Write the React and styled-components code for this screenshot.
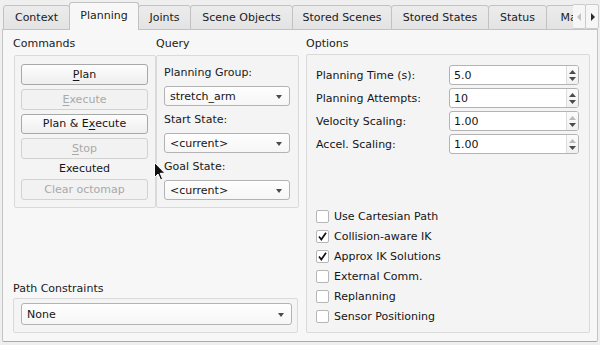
import React from 'react'
import styled, { createGlobalStyle } from 'styled-components'

const GlobalStyle = createGlobalStyle`
  html, body {
    margin: 0;
    padding: 0;
    background: #efefef;
  }
  body {
    font-family: "DejaVu Sans", "Liberation Sans", sans-serif;
    font-size: 11px;
    color: #202020;
  }
`

const tabs = [
  { label: 'Context', w: 67 },
  { label: 'Planning', w: 70, active: true },
  { label: 'Joints', w: 53 },
  { label: 'Scene Objects', w: 103 },
  { label: 'Stored Scenes', w: 100 },
  { label: 'Stored States', w: 98 },
  { label: 'Status', w: 59 },
  { label: 'Manipulation', w: 100 },
]

const spins = [
  { label: 'Planning Time (s):', value: '5.0' },
  { label: 'Planning Attempts:', value: '10' },
  { label: 'Velocity Scaling:', value: '1.00', atMax: true },
  { label: 'Accel. Scaling:', value: '1.00', atMax: true },
]

const checks = [
  { label: 'Use Cartesian Path' },
  { label: 'Collision-aware IK', checked: true },
  { label: 'Approx IK Solutions', checked: true },
  { label: 'External Comm.' },
  { label: 'Replanning' },
  { label: 'Sensor Positioning' },
]

function App() {
  return (
    <Window>
      <GlobalStyle />
      <TabBar>
        <TabStrip>
          {tabs.map((t) => (
            <Tab key={t.label} w={t.w} active={t.active}>
              {t.label}
            </Tab>
          ))}
        </TabStrip>
        <ScrollButton>
          <Arrow viewBox="0 0 5 8" disabled>
            <path d="M4 0 L0 4 L4 8 Z" />
          </Arrow>
        </ScrollButton>
        <ScrollButton>
          <Arrow viewBox="0 0 5 8">
            <path d="M1 0 L5 4 L1 8 Z" />
          </Arrow>
        </ScrollButton>
      </TabBar>

      <Pane>
        <LeftColumn>
          <TopRow>
            <Section>
              <SectionTitle>Commands</SectionTitle>
              <CommandBox>
                <Button>
                  <u>P</u>lan
                </Button>
                <Button disabled>
                  <u>E</u>xecute
                </Button>
                <Button>
                  Plan &amp; E<u>x</u>ecute
                </Button>
                <Button disabled>
                  <u>S</u>top
                </Button>
                <Status>Executed</Status>
                <Button disabled>Clear octomap</Button>
              </CommandBox>
            </Section>
            <Section>
              <SectionTitle>Query</SectionTitle>
              <QueryBox>
                <Field>
                  <FieldLabel>Planning Group:</FieldLabel>
                  <Combo>stretch_arm</Combo>
                </Field>
                <Field>
                  <FieldLabel>Start State:</FieldLabel>
                  <Combo>&lt;current&gt;</Combo>
                </Field>
                <Field>
                  <FieldLabel>Goal State:</FieldLabel>
                  <Combo>&lt;current&gt;</Combo>
                </Field>
              </QueryBox>
            </Section>
          </TopRow>

          <Section>
            <SectionTitle>Path Constraints</SectionTitle>
            <PathBox>
              <Combo tall>None</Combo>
            </PathBox>
          </Section>
        </LeftColumn>

        <Section>
          <SectionTitle>Options</SectionTitle>
          <OptionsBox>
            <SpinGrid>
              {spins.map((s) => (
                <React.Fragment key={s.label}>
                  <SpinLabel>{s.label}</SpinLabel>
                  <SpinBox>
                    <SpinValue>{s.value}</SpinValue>
                    <SpinArrows>
                      <SpinArrow viewBox="0 0 7 4" disabled={s.atMax}>
                        <path d="M0 4 L3.5 0 L7 4 Z" />
                      </SpinArrow>
                      <SpinArrow viewBox="0 0 7 4">
                        <path d="M0 0 L3.5 4 L7 0 Z" />
                      </SpinArrow>
                    </SpinArrows>
                  </SpinBox>
                </React.Fragment>
              ))}
            </SpinGrid>

            <CheckList>
              {checks.map((c) => (
                <CheckRow key={c.label}>
                  <CheckBox>
                    {c.checked && (
                      <svg width="11" height="11" viewBox="0 0 11 11">
                        <path d="M2 5.6 L4.3 8.6 L9 1.8" fill="none" stroke="#111" strokeWidth="1.7" />
                      </svg>
                    )}
                  </CheckBox>
                  {c.label}
                </CheckRow>
              ))}
            </CheckList>
          </OptionsBox>
        </Section>
      </Pane>

      <Cursor width="12" height="19" viewBox="0 0 12 19">
        <path d="M0.5 0.5 L0.5 15.5 L4 12 L6.5 17.8 L8.6 16.9 L6.2 11.3 L11 11.3 Z" fill="#111" stroke="#fff" strokeWidth="1" />
      </Cursor>
    </Window>
  )
}

const Window = styled.div`
  position: relative;
  width: 600px;
  height: 345px;
  background: #efefef;
  overflow: hidden;
`

const TabBar = styled.div`
  display: flex;
  align-items: flex-end;
  height: 30px;
  padding-left: 3px;
`

const TabStrip = styled.div`
  display: flex;
  align-items: flex-end;
  width: 570px;
  height: 30px;
  overflow: hidden;
`

const Tab = styled.div`
  position: relative;
  z-index: ${(p) => (p.active ? 2 : 1)};
  flex: none;
  box-sizing: border-box;
  width: ${(p) => p.w}px;
  height: ${(p) => (p.active ? 28 : 25)}px;
  margin-right: -1px;
  display: flex;
  align-items: center;
  justify-content: center;
  padding-bottom: ${(p) => (p.active ? 2 : 1)}px;
  border: 1px solid #c2c2c2;
  border-bottom: ${(p) => (p.active ? 'none' : '1px solid #c2c2c2')};
  border-radius: 3px 3px 0 0;
  background: ${(p) => (p.active ? '#f7f7f7' : 'linear-gradient(#ececec, #e3e3e3)')};
  color: #202020;
  white-space: nowrap;
`

const ScrollButton = styled.div`
  flex: none;
  box-sizing: border-box;
  width: 14px;
  height: 25px;
  margin-bottom: 1px;
  margin-left: -1px;
  display: flex;
  align-items: center;
  justify-content: center;
  border: 1px solid #cbcbcb;
  border-radius: 2px;
  background: #f6f6f6;
`

const Arrow = styled.svg`
  width: 5px;
  height: 8px;
  fill: ${(p) => (p.disabled ? '#c4c4c4' : '#2b2b2b')};
`

const Pane = styled.div`
  position: relative;
  box-sizing: border-box;
  width: 596px;
  height: 313px;
  margin: -1px 0 0 2px;
  padding: 7px 7px 8px 10px;
  display: grid;
  grid-template-columns: 286px 1fr;
  column-gap: 7px;
  border: 1px solid #c4c4c4;
  border-bottom-color: #a9a9a9;
  border-radius: 0 0 2px 2px;
  background: #f7f7f7;
`

const LeftColumn = styled.div`
  display: flex;
  flex-direction: column;
  justify-content: space-between;
`

const TopRow = styled.div`
  display: grid;
  grid-template-columns: 143px 143px;
`

const Section = styled.div`
  display: flex;
  flex-direction: column;
`

const SectionTitle = styled.div`
  height: 14px;
  line-height: 14px;
  margin-bottom: ${(p) => (p.tight ? 2 : 4)}px;
  white-space: nowrap;
`

const GroupBox = styled.div`
  box-sizing: border-box;
  border: 1px solid #dadada;
  border-radius: 2px;
  background: #f4f4f4;
`

const CommandBox = styled(GroupBox)`
  margin-left: 1px;
  height: 153px;
  padding: 8px 7px 7px 6px;
  display: flex;
  flex-direction: column;
  gap: 4px;
`

const Button = styled.div`
  box-sizing: border-box;
  height: 21px;
  display: flex;
  align-items: center;
  justify-content: center;
  border: 1px solid ${(p) => (p.disabled ? '#d2d2d2' : '#a8a8a8')};
  border-radius: 3px;
  background: ${(p) => (p.disabled ? '#f2f2f2' : 'linear-gradient(#fdfdfd, #eeeeee)')};
  color: ${(p) => (p.disabled ? '#a9a9a9' : '#151515')};
  white-space: nowrap;

  u {
    text-underline-offset: 2px;
  }
`

const Status = styled.div`
  height: 12px;
  line-height: 12px;
  text-align: center;
  color: #151515;
`

const QueryBox = styled(GroupBox)`
  height: 153px;
  padding: 10px 8px 0 7px;
  display: flex;
  flex-direction: column;
  gap: 7px;
`

const Field = styled.div`
  display: flex;
  flex-direction: column;
  gap: 6px;
`

const FieldLabel = styled.div`
  height: 14px;
  line-height: 14px;
`

const Combo = styled.div`
  position: relative;
  box-sizing: border-box;
  height: ${(p) => (p.tall ? 22 : 20)}px;
  padding-left: 5px;
  display: flex;
  align-items: center;
  border: 1px solid #b3b3b3;
  border-radius: 3px;
  background: linear-gradient(#fefefe, #f6f6f6);
  color: #151515;

  &::after {
    content: '';
    position: absolute;
    right: 7px;
    top: 50%;
    margin-top: -1px;
    border-left: 3.5px solid transparent;
    border-right: 3.5px solid transparent;
    border-top: 4px solid #4a4a4a;
  }
`

const PathBox = styled(GroupBox)`
  width: 285px;
  margin-top: -2px;
  padding: 4px 5px 7px 7px;
`

const OptionsBox = styled(GroupBox)`
  flex: 1;
  margin-top: -1px;
  padding: 10px 10px 9px 9px;
  display: flex;
  flex-direction: column;
  justify-content: space-between;
`

const SpinGrid = styled.div`
  display: grid;
  grid-template-columns: 133px 1fr;
  grid-auto-rows: 20px;
  row-gap: 3px;
  align-items: center;
`

const SpinLabel = styled.div`
  white-space: nowrap;
  color: #151515;
`

const SpinBox = styled.div`
  box-sizing: border-box;
  height: 20px;
  display: flex;
  border: 1px solid #b3b3b3;
  border-radius: 3px;
  background: #fff;
`

const SpinValue = styled.div`
  flex: 1;
  padding-left: 4px;
  display: flex;
  align-items: center;
  color: #151515;
`

const SpinArrows = styled.div`
  width: 11px;
  display: flex;
  flex-direction: column;
  align-items: center;
  justify-content: center;
  gap: 3px;
  border-left: 1px solid #dcdcdc;
  background: linear-gradient(#fbfbfb, #f1f1f1);
  border-radius: 0 2px 2px 0;
`

const SpinArrow = styled.svg`
  width: 7px;
  height: 4px;
  fill: ${(p) => (p.disabled ? '#b9b9b9' : '#4a4a4a')};
`

const CheckList = styled.div`
  display: flex;
  flex-direction: column;
  gap: 7px;
`

const CheckRow = styled.div`
  height: 13px;
  display: flex;
  align-items: center;
  gap: 5px;
  color: #151515;
  white-space: nowrap;
`

const CheckBox = styled.div`
  box-sizing: border-box;
  width: 13px;
  height: 13px;
  display: flex;
  align-items: center;
  justify-content: center;
  border: 1px solid #b6b6b6;
  border-radius: 2px;
  background: #fff;
`

const Cursor = styled.svg`
  position: absolute;
  left: 154px;
  top: 162px;
`

export default App
